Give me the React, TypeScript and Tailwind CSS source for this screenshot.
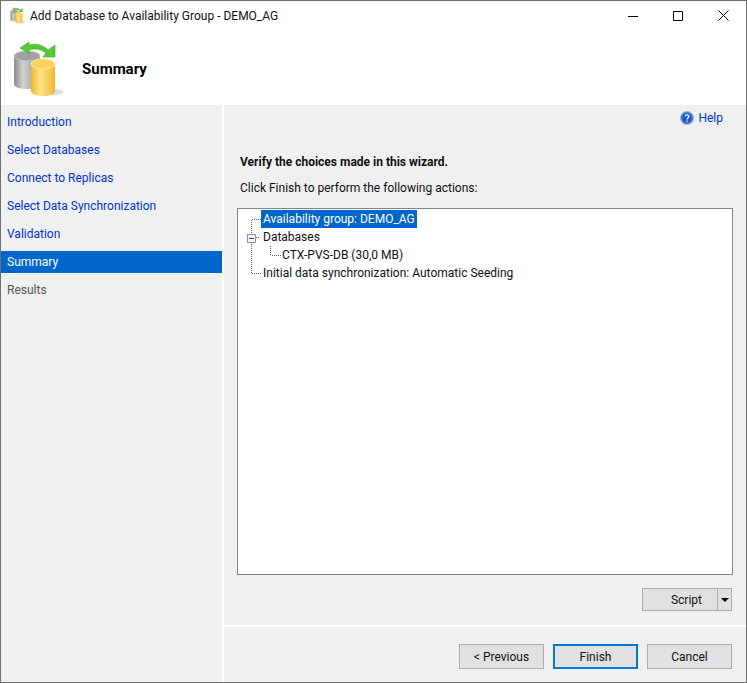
const steps = [
  { label: "Introduction", state: "link" },
  { label: "Select Databases", state: "link" },
  { label: "Connect to Replicas", state: "link" },
  { label: "Select Data Synchronization", state: "link" },
  { label: "Validation", state: "link" },
  { label: "Summary", state: "active" },
  { label: "Results", state: "off" },
];

function DbIcon({ width, height, id }: { width: number; height: number; id: string }) {
  return (
    <svg width={width} height={height} viewBox="0 0 50 58" className="block shrink-0">
      <defs>
        <linearGradient id={`${id}-grey`} x1="0" x2="1" y1="0" y2="0">
          <stop offset="0" stopColor="#8a8a8a" />
          <stop offset="0.35" stopColor="#d2d2d2" />
          <stop offset="1" stopColor="#8c8c8c" />
        </linearGradient>
        <linearGradient id={`${id}-yellow`} x1="0" x2="1" y1="0" y2="0">
          <stop offset="0" stopColor="#f3b32a" />
          <stop offset="0.4" stopColor="#ffe68a" />
          <stop offset="1" stopColor="#f2b431" />
        </linearGradient>
      </defs>
      <ellipse cx="35" cy="52" rx="15" ry="3.500" fill="#dcdcdc" />
      <path d="M1 16v28c0 3 6 5 13 5s13-2 13-5V16z" fill={`url(#${id}-grey)`} />
      <ellipse cx="14" cy="16" rx="13" ry="5" fill="#a0a0a0" stroke="#c9c9c9" />
      <path d="M18 24v27c0 3 6 5 12 5s12-2 12-5V24z" fill={`url(#${id}-yellow)`} />
      <ellipse cx="30" cy="24" rx="12" ry="5" fill="#fbd25e" stroke="#ffe9a0" />
      <path d="M7 8l9-6 0 3c7-2 14 0 19 5l7-5 0 12-12 0 3-4c-5-4-11-5-17-3l1 4z" fill="#58c738" stroke="#3fa626" strokeWidth="0.6" />
    </svg>
  );
}

function TreeRow({ indent, selected, children }: { indent: string; selected?: boolean; children: string }) {
  return (
    <div className={`h-[18px] flex items-center ${indent}`}>
      <span className={`h-[18px] px-[2px] leading-[18px] ${selected ? "bg-[#0066cc] text-white" : "text-[#111]"}`}>{children}</span>
    </div>
  );
}

function Btn({ label, primary }: { label: string; primary?: boolean }) {
  return (
    <div
      className={`w-[85px] h-[25px] flex items-center justify-center bg-[#e1e1e1] text-[#111] border ${
        primary ? "border-2 border-[#0078d7]" : "border-[#adadad]"
      }`}
    >
      {label}
    </div>
  );
}

export default function App() {
  return (
    <div
      className="w-[747px] h-[683px] flex flex-col border border-[#707070] bg-white text-[12px] overflow-hidden"
      style={{ fontFamily: 'Roboto, "Liberation Sans", sans-serif' }}
    >
      {/* title bar */}
      <div className="h-[39px] flex items-start pt-[6px] pl-[9px] shrink-0">
        <DbIcon width={15} height={17} id="small" />
        <span className="ml-[5px] leading-[18px] text-[#111]">Add Database to Availability Group - DEMO_AG</span>
        <div className="ml-auto flex items-center gap-[35px] pr-[17px] pt-[3px]">
          <svg width="10" height="10" viewBox="0 0 10 10"><path d="M0 5.500h10" stroke="#000" /></svg>
          <svg width="10" height="10" viewBox="0 0 10 10"><path d="M.5.500h9v9h-9z" fill="none" stroke="#000" /></svg>
          <svg width="11" height="11" viewBox="0 0 11 11"><path d="M.5.500l10 10M10.500.500l-10 10" stroke="#000" fill="none" /></svg>
        </div>
      </div>

      {/* header */}
      <div className="h-[65px] flex items-start pl-[12px] shrink-0">
        <DbIcon width={50} height={58} id="big" />
        <span className="ml-[19px] mt-[19px] text-[15px] font-bold leading-[20px] text-black">Summary</span>
      </div>

      <div className="flex-1 flex min-h-0">
        {/* sidebar */}
        <div className="w-[221px] bg-[#f0f0f0] pt-[6px] flex flex-col gap-[6px] shrink-0">
          {steps.map((s) => (
            <div
              key={s.label}
              className={`h-[22px] pl-[6px] leading-[22px] ${
                s.state === "active" ? "bg-[#0066cc] text-white" : s.state === "link" ? "text-[#0033cc]" : "text-[#555]"
              }`}
            >
              {s.label}
            </div>
          ))}
        </div>

        {/* content */}
        <div className="ml-[2px] flex-1 bg-[#f0f0f0] flex flex-col">
          <div className="h-[25px] flex items-center justify-end pr-[23px] pt-[1px] gap-[4px] shrink-0">
            <svg width="14" height="14" viewBox="0 0 14 14">
              <circle cx="7" cy="7" r="6.500" fill="#3b78d8" stroke="#9db8dc" />
              <circle cx="7" cy="7" r="4.500" fill="#2456b8" />
              <path d="M5.300 5.600c0-2.300 3.500-2.300 3.500-.1 0 1.400-1.800 1.400-1.800 2.900" fill="none" stroke="#fff" strokeWidth="1.300" />
              <path d="M6.300 9.400h1.400v1.400H6.300z" fill="#fff" />
            </svg>
            <span className="text-[#0033cc]">Help</span>
          </div>

          <div className="pl-[16px] pt-[23px] font-bold text-[#111] leading-[18px]">Verify the choices made in this wizard.</div>
          <div className="pl-[16px] pt-[8px] text-[#111] leading-[18px]">Click Finish to perform the following actions:</div>

          <div className="mx-[13px] mt-[11px] h-[367px] bg-white border border-[#82878f] pt-[1px] relative">
            <svg width="40" height="72" className="absolute left-[6px] top-[1px]" shapeRendering="crispEdges">
              <path
                d="M7.500 9.500h9M7.500 10V63.500h9M12 27.500h4M36.500 45.500h-10M26.500 36V45.500"
                fill="none"
                stroke="#666"
                strokeDasharray="1 1"
              />
              <rect x="3.500" y="24.500" width="8" height="8" fill="#f4f6fa" stroke="#8a94a6" />
              <path d="M5 28.500h5" stroke="#20409a" />
            </svg>
            <TreeRow indent="pl-[23px]" selected>Availability group: DEMO_AG</TreeRow>
            <TreeRow indent="pl-[23px]">Databases</TreeRow>
            <TreeRow indent="pl-[42px]">CTX-PVS-DB (30,0 MB)</TreeRow>
            <TreeRow indent="pl-[23px]">Initial data synchronization: Automatic Seeding</TreeRow>
          </div>

          <div className="flex justify-end pr-[14px] mt-[13px]">
            <div className="w-[90px] h-[23px] flex bg-[#e1e1e1] border border-[#adadad] text-[#111]">
              <div className="flex-1 flex items-center justify-end pr-[15px]">Script</div>
              <div className="w-[14px] border-l border-[#adadad] flex items-center justify-center">
                <div className="w-0 h-0 border-x-[4px] border-x-transparent border-t-[4px] border-t-black" />
              </div>
            </div>
          </div>

          <div className="h-[2px] mt-[14px] bg-white shrink-0" />

          <div className="flex justify-end gap-[9px] pr-[14px] pt-[17px]">
            <Btn label="< Previous" />
            <Btn label="Finish" primary />
            <Btn label="Cancel" />
          </div>
        </div>
      </div>
    </div>
  );
}
